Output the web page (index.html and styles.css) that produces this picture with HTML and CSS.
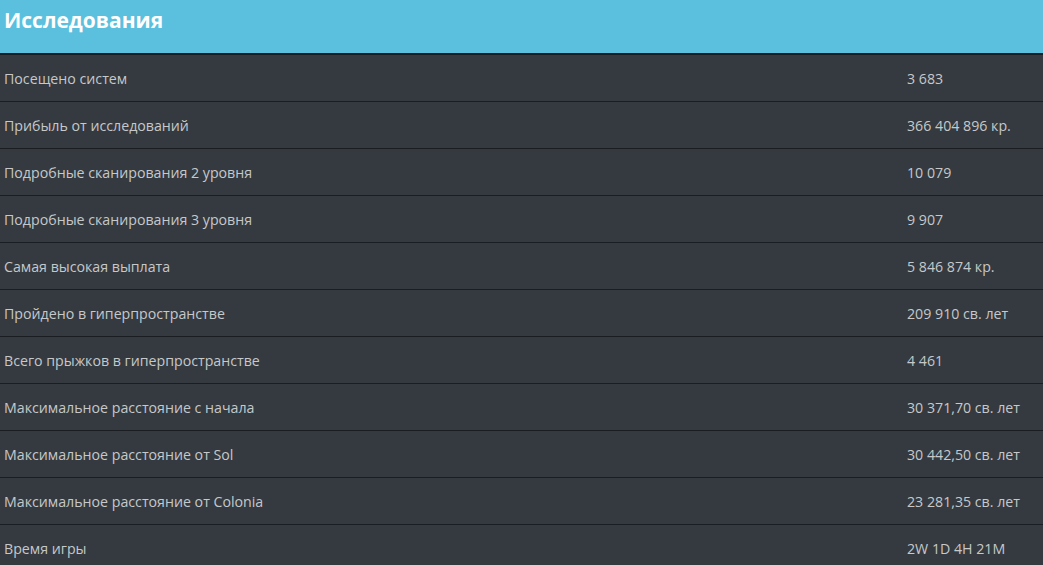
FILE: index.html
```html
<!DOCTYPE html>
<html lang="ru">
<head>
<meta charset="utf-8">
<link rel="stylesheet" href="styles.css">
</head>
<body>
<div class="panel">
  <div class="panel-header">Исследования</div>
  <div class="stats">
    <div class="row"><span class="label">Посещено систем</span><span class="value">3 683</span></div>
    <div class="row"><span class="label">Прибыль от исследований</span><span class="value">366 404 896 кр.</span></div>
    <div class="row"><span class="label">Подробные сканирования 2 уровня</span><span class="value">10 079</span></div>
    <div class="row"><span class="label">Подробные сканирования 3 уровня</span><span class="value">9 907</span></div>
    <div class="row"><span class="label">Самая высокая выплата</span><span class="value">5 846 874 кр.</span></div>
    <div class="row"><span class="label">Пройдено в гиперпространстве</span><span class="value">209 910 св. лет</span></div>
    <div class="row"><span class="label">Всего прыжков в гиперпространстве</span><span class="value">4 461</span></div>
    <div class="row"><span class="label">Максимальное расстояние с начала</span><span class="value">30 371,70 св. лет</span></div>
    <div class="row"><span class="label">Максимальное расстояние от Sol</span><span class="value">30 442,50 св. лет</span></div>
    <div class="row"><span class="label">Максимальное расстояние от Colonia</span><span class="value">23 281,35 св. лет</span></div>
    <div class="row"><span class="label">Время игры</span><span class="value">2W 1D 4H 21M</span></div>
  </div>
</div>
</body>
</html>
```

FILE: styles.css
```css
html, body {
  margin: 0;
  padding: 0;
  background: #343a40;
}
body {
  font-family: "Open Sans", "Noto Sans", sans-serif;
  overflow: hidden;
}
.panel {
  width: 1043px;
}
.panel-header {
  background: #5bc0de;
  color: #ffffff;
  font-weight: 700;
  font-size: 21px;
  line-height: 28px;
  box-sizing: border-box;
  padding: 6px 4px 0;
  border-bottom: 2px solid #1a1d21;
  height: 55px;
}
.stats {
  display: flex;
  flex-direction: column;
}
.row {
  display: grid;
  grid-template-columns: 903px 1fr;
  height: 47px;
  box-sizing: border-box;
  align-items: center;
  border-bottom: 1px solid #1a1d21;
  color: #c6c8ca;
  font-size: 14.2px;
}
.label, .value {
  padding-left: 4px;
}
```
